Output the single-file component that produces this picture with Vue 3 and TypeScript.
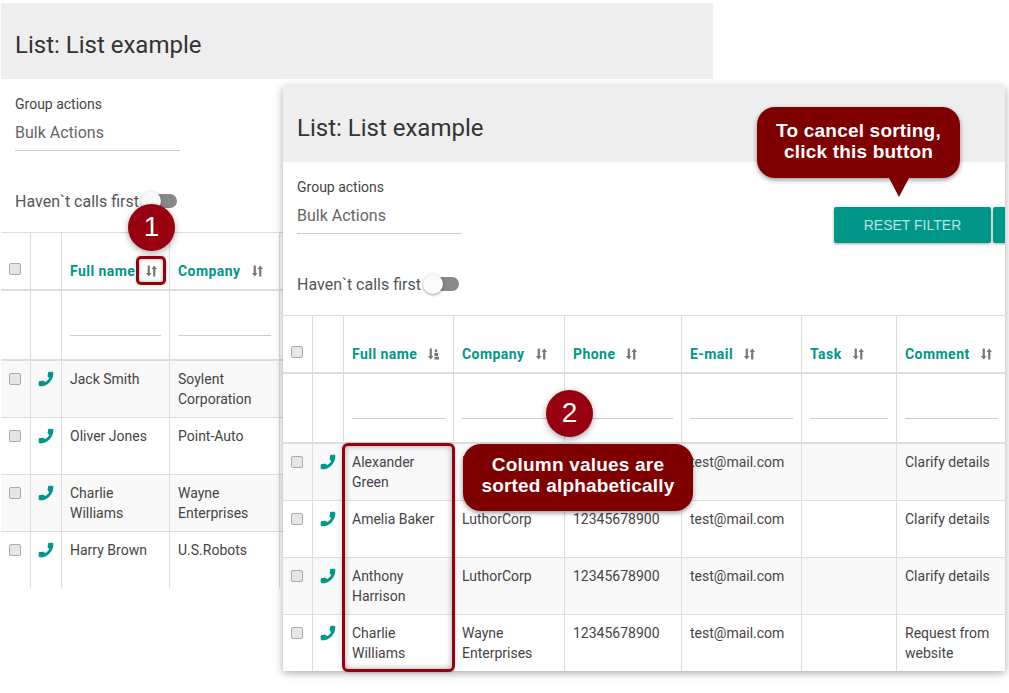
<script setup lang="ts">
interface Column { label: string; width: number }
interface Row { cells: string[] }
interface Win { key: string; cols: Column[]; rows: Row[]; sorted: boolean }

const windows: Win[] = [
  {
    key: 'back',
    sorted: false,
    cols: [
      { label: 'Full name', width: 108 },
      { label: 'Company', width: 110 },
      { label: 'Phone', width: 117 },
      { label: 'E-mail', width: 120 },
      { label: 'Task', width: 95 },
      { label: 'Comment', width: 101 },
    ],
    rows: [
      { cells: ['Jack Smith', 'Soylent Corporation', '12345678900', 'test@mail.com', '', 'Clarify details'] },
      { cells: ['Oliver Jones', 'Point-Auto', '12345678900', 'test@mail.com', '', 'Clarify details'] },
      { cells: ['Charlie Williams', 'Wayne Enterprises', '12345678900', 'test@mail.com', '', 'Clarify details'] },
      { cells: ['Harry Brown', 'U.S.Robots', '12345678900', 'test@mail.com', '', 'Clarify details'] },
    ],
  },
  {
    key: 'front',
    sorted: true,
    cols: [
      { label: 'Full name', width: 110 },
      { label: 'Company', width: 111 },
      { label: 'Phone', width: 117 },
      { label: 'E-mail', width: 120 },
      { label: 'Task', width: 95 },
      { label: 'Comment', width: 109 },
    ],
    rows: [
      { cells: ['Alexander Green', 'LuthorCorp', '12345678900', 'test@mail.com', '', 'Clarify details'] },
      { cells: ['Amelia Baker', 'LuthorCorp', '12345678900', 'test@mail.com', '', 'Clarify details'] },
      { cells: ['Anthony Harrison', 'LuthorCorp', '12345678900', 'test@mail.com', '', 'Clarify details'] },
      { cells: ['Charlie Williams', 'Wayne Enterprises', '12345678900', 'test@mail.com', '', 'Request from website'] },
    ],
  },
]
</script>

<template>
  <div class="page">
    <section v-for="w in windows" :key="w.key" class="window" :class="w.key">
      <header class="title">List: List example</header>
      <div class="toolbar">
        <div class="group">
          <div class="group-label">Group actions</div>
          <div class="group-select">Bulk Actions</div>
        </div>
        <div class="buttons">
          <button class="btn" type="button">RESET FILTER</button>
          <button class="btn" type="button"></button>
        </div>
      </div>
      <div class="switch-row">
        <span>Haven`t calls first</span>
        <span class="switch"><span class="thumb"></span></span>
      </div>
      <table class="grid">
        <colgroup>
          <col style="width: 30px" />
          <col style="width: 31px" />
          <col v-for="c in w.cols" :key="c.label" :style="{ width: c.width + 'px' }" />
        </colgroup>
        <thead>
          <tr class="head-row">
            <th class="check-head"><span class="check"></span></th>
            <th></th>
            <th v-for="(c, i) in w.cols" :key="c.label">
              <span class="th-inner">
                {{ c.label }}
                <svg v-if="w.sorted && i === 0" class="sort" viewBox="0 0 12 12" fill="#777">
                  <path d="M1.8 0h2.4v8.2h1.8L3 12 0 8.2h1.8z" />
                  <path d="M7 9h5v3H7zM7 5h4v3.2H7zM7.4 1h2.6v3.2H7.4z" />
                </svg>
                <svg v-else class="sort" viewBox="0 0 12 12" fill="#777">
                  <path d="M1.8 0h2.4v8.2h1.8L3 12 0 8.2h1.8z" />
                  <path d="M7.8 12h2.4V3.8H12L9 0 6 3.8h1.8z" />
                </svg>
              </span>
            </th>
          </tr>
          <tr class="filter-row">
            <td></td>
            <td></td>
            <td v-for="c in w.cols" :key="c.label"><div class="filter-line"></div></td>
          </tr>
        </thead>
        <tbody>
          <tr v-for="(r, ri) in w.rows" :key="ri" class="data-row">
            <td class="check-cell"><span class="check"></span></td>
            <td class="phone-cell">
              <svg class="phone" viewBox="0 0 24 24" fill="#009688" stroke="#009688" stroke-width="1.6" stroke-linejoin="round">
                <g transform="translate(24 0) scale(-1 1)">
                  <path d="M6.62 10.79c1.44 2.83 3.76 5.14 6.59 6.59l2.2-2.2c.27-.27.67-.36 1.02-.24 1.12.37 2.33.57 3.57.57.55 0 1 .45 1 1V20c0 .55-.45 1-1 1-9.39 0-17-7.61-17-17 0-.55.45-1 1-1h3.5c.55 0 1 .45 1 1 0 1.25.2 2.45.57 3.57.11.35.03.74-.25 1.02l-2.2 2.2z" />
                </g>
              </svg>
            </td>
            <td v-for="(cell, ci) in r.cells" :key="ci">{{ cell }}</td>
          </tr>
        </tbody>
      </table>
    </section>

    <div class="mark mark-icon"></div>
    <div class="mark mark-column"></div>
    <div class="badge badge-one">1</div>
    <div class="badge badge-two">2</div>
    <div class="callout callout-cancel">To cancel sorting,<br />click this button</div>
    <div class="callout callout-sorted">Column values are<br />sorted alphabetically</div>
  </div>
</template>

<style>
html, body { margin: 0; background: #fff; }
</style>

<style scoped>
.page {
  position: relative;
  width: 1009px;
  height: 693px;
  overflow: hidden;
  background: #fff;
  font-family: Roboto, "Liberation Sans", sans-serif;
  color: #444;
}
.window {
  position: absolute;
  height: 585px;
  overflow: hidden;
  background: #fff;
}
.back { left: 1px; top: 3px; width: 712px; }
.front {
  left: 283px;
  top: 86px;
  width: 722px;
  box-shadow: 0 2px 8px rgba(0, 0, 0, 0.35);
}
.title {
  height: 76px;
  box-sizing: border-box;
  padding: 26px 14px 0;
  background: #eee;
  font-size: 24px;
  line-height: 32px;
  color: #333;
}
.toolbar {
  display: flex;
  height: 111px;
  padding-left: 14px;
  box-sizing: border-box;
}
.group { width: 165px; flex: none; padding-top: 16px; }
.group-label { font-size: 14px; line-height: 18px; color: #444; white-space: nowrap; }
.group-select {
  margin-top: 10px;
  height: 27px;
  font-size: 16px;
  line-height: 20px;
  color: #666;
  border-bottom: 1px solid #ccc;
  white-space: nowrap;
}
.buttons { display: flex; gap: 2px; margin-left: 372px; padding-top: 45px; flex: none; align-items: flex-start; }
.btn {
  height: 36px;
  width: 157px;
  padding: 0;
  border: 0;
  border-radius: 2px;
  background: #009688;
  color: #b9e3de;
  font: 14px "Liberation Sans", sans-serif;
  box-shadow: 0 1px 3px rgba(0, 0, 0, 0.35);
  flex: none;
}
.switch-row {
  display: flex;
  align-items: center;
  height: 22px;
  padding: 0 14px;
  font-size: 16px;
  color: #555;
}
.switch {
  position: relative;
  width: 34px;
  height: 14px;
  margin-left: 4px;
  border-radius: 7px;
  background: #888;
}
.thumb {
  position: absolute;
  left: -2px;
  top: -3px;
  width: 20px;
  height: 20px;
  border-radius: 50%;
  background: #fafafa;
  box-shadow: 0 1px 3px rgba(0, 0, 0, 0.4);
}
.grid {
  margin-top: 20px;
  border-collapse: separate;
  border-spacing: 0;
  table-layout: fixed;
  width: 100%;
  font-size: 14px;
  line-height: 20px;
}
.grid th, .grid td {
  box-sizing: border-box;
  border-right: 1px solid #ddd;
  padding: 0 8px;
}
.grid th:last-child, .grid td:last-child { border-right: 0; }
.grid th {
  height: 59px;
  border-top: 1px solid #ddd;
  border-bottom: 2px solid #ddd;
  vertical-align: top;
  text-align: left;
  padding-top: 28px;
}
.th-inner {
  display: flex;
  align-items: center;
  gap: 11px;
  font-weight: 700;
  color: #009688;
  white-space: nowrap;
  letter-spacing: 0.45px;
}
.sort { width: 11px; height: 12px; flex: none; }
.filter-row td {
  height: 70px;
  border-bottom: 2px solid #ddd;
}
.filter-line { height: 1px; margin-top: 20px; background: #ccc; }
.data-row td {
  height: 57px;
  border-bottom: 1px solid #ddd;
  vertical-align: top;
  padding-top: 8px;
}
.data-row:nth-child(odd) td { background: #f9f9f9; }
.check {
  display: block;
  box-sizing: border-box;
  width: 12px;
  height: 12px;
  border: 1px solid #aaa;
  border-radius: 2px;
  background: #e6e6e6;
}
.grid .check-head { padding: 30px 0 0 8px; }
.grid .data-row .check-cell { padding: 12px 0 0 8px; }
.grid .data-row .phone-cell { padding: 9px 0 0 6px; }
.phone { display: block; width: 18px; height: 18px; }
.mark {
  position: absolute;
  box-sizing: border-box;
  border: 3px solid #96000f;
}
.mark-icon {
  left: 136px;
  top: 256px;
  width: 30px;
  height: 29px;
  border-radius: 5px;
  box-shadow: inset 0 0 4px rgba(0, 0, 0, 0.3), 0 0 3px rgba(0, 0, 0, 0.25);
}
.mark-column {
  left: 342px;
  top: 443px;
  width: 113px;
  height: 229px;
  border-radius: 6px;
  box-shadow: inset 0 0 6px rgba(0, 0, 0, 0.35), 0 0 3px rgba(0, 0, 0, 0.25);
}
.badge {
  position: absolute;
  width: 47px;
  height: 47px;
  border-radius: 50%;
  background: #96000f;
  color: #fff;
  font: 28px/46px "Liberation Sans", sans-serif;
  text-align: center;
  box-shadow: 0 2px 6px rgba(0, 0, 0, 0.35);
}
.badge-one { left: 128px; top: 204px; }
.badge-two { left: 546px; top: 390px; }
.callout {
  position: absolute;
  box-sizing: border-box;
  background: #7f0000;
  color: #fff;
  font: 700 19px/21px "Liberation Sans", sans-serif;
  text-align: center;
  letter-spacing: 0.2px;
  border-radius: 18px;
  box-shadow: 0 2px 5px rgba(0, 0, 0, 0.4);
}
.callout-cancel { left: 757px; top: 107px; width: 203px; height: 71px; padding-top: 13px; }
.callout-cancel::after {
  content: "";
  position: absolute;
  left: 132px;
  top: 71px;
  border-style: solid;
  border-width: 19px 10px 0;
  border-color: #7f0000 transparent transparent;
}
.callout-sorted { left: 463px; top: 444px; width: 230px; height: 67px; padding-top: 10px; }
</style>
